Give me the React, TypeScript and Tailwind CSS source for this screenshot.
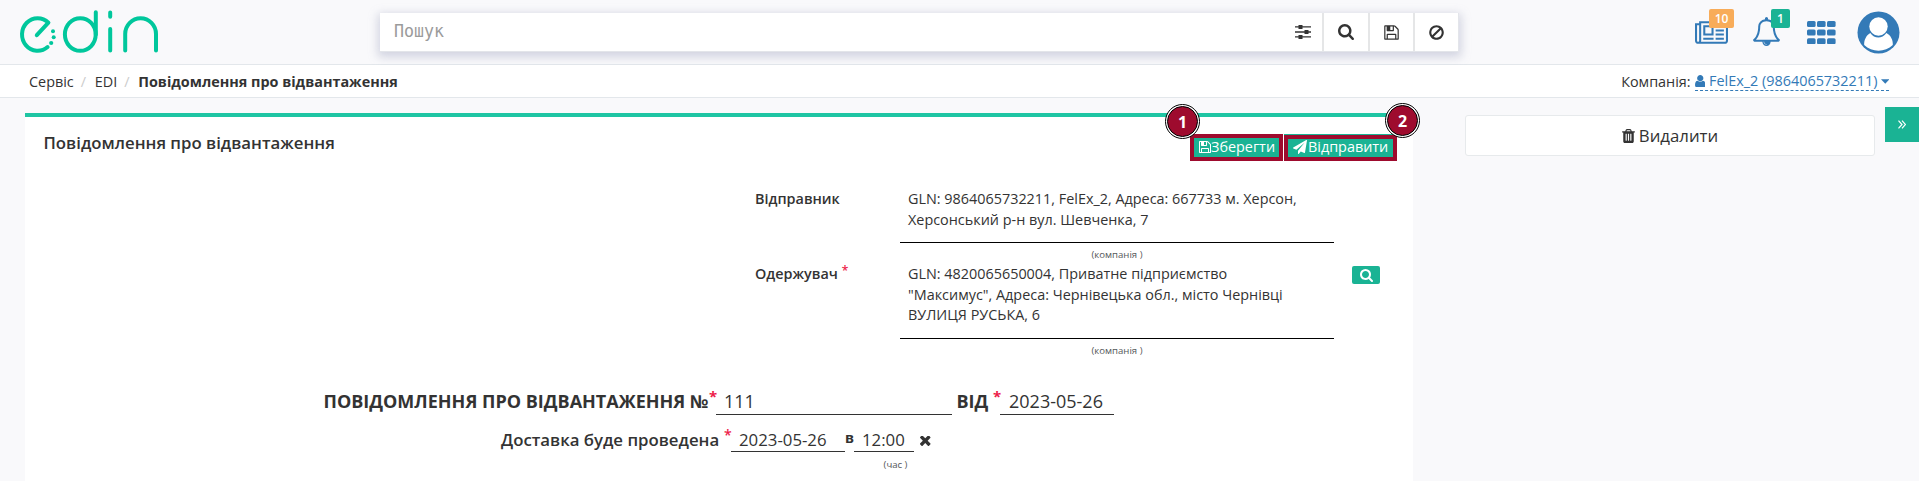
import React from "react";

const paths = {
  search:
    "M1152 704q0-185-131.5-316.5t-316.5-131.5-316.5 131.5-131.5 316.5 131.5 316.5 316.5 131.5 316.5-131.5 131.5-316.5zm512 832q0 52-38 90t-90 38q-54 0-90-38l-343-342q-179 124-399 124-143 0-273.5-55.5t-225-150-150-225-55.5-273.5 55.5-273.5 150-225 225-150 273.5-55.5 273.5 55.5 225 150 150 225 55.5 273.5q0 220-124 399l343 343q37 37 37 90z",
  save: "M512 1536h768v-384h-768v384zm896 0h128v-896q0-14-10-38.5t-20-34.5l-281-281q-10-10-34-20t-39-10v416q0 40-28 68t-68 28h-576q-40 0-68-28t-28-68v-416h-128v1280h128v-416q0-40 28-68t68-28h832q40 0 68 28t28 68v416zm-384-928v-320q0-13-9.5-22.5t-22.5-9.5h-192q-13 0-22.5 9.5t-9.5 22.5v320q0 13 9.5 22.5t22.5 9.5h192q13 0 22.5-9.5t9.5-22.5zm640 32v928q0 40-28 68t-68 28h-1344q-40 0-68-28t-28-68v-1344q0-40 28-68t68-28h928q40 0 88 20t76 48l280 280q28 28 48 76t20 88z",
  bell: "M912 1696q0-16-16-16-59 0-101.5-42.5t-42.5-101.5q0-16-16-16t-16 16q0 73 51.5 124.5t124.5 51.5q16 0 16-16zm-666-288h1300q-266-300-266-832 0-51-24-105t-69-103-121.5-80.5-169.5-31.5-169.5 31.5-121.5 80.5-69 103-24 105q0 532-266 832zm1482 0q0 52-38 90t-90 38h-448q0 106-75 181t-181 75-181-75-75-181h-448q-52 0-90-38t-38-90q50-42 91-88t85-119.5 74.5-158.5 50-206 19.5-260q0-152 117-282.5t307-158.5q-8-19-8-39 0-40 28-68t68-28 68 28 28 68q0 20-8 39 190 28 307 158.5t117 282.5q0 139 19.5 260t50 206 74.5 158.5 85 119.5 91 88z",
  news: "M1024 512h-384v384h384v-384zm128 640v128h-640v-128h640zm0-768v640h-640v-640h640zm640 768v128h-512v-128h512zm0-256v128h-512v-128h512zm0-256v128h-512v-128h512zm0-256v128h-512v-128h512zm-1536 960v-960h-128v960q0 26 19 45t45 19 45-19 19-45zm1664 0v-1088h-1536v1088q0 33-11 64h1483q26 0 45-19t19-45zm128-1216v1216q0 80-56 136t-136 56h-1664q-80 0-136-56t-56-136v-1088h256v-128h1792z",
  trash:
    "M704 1376v-704q0-14-9-23t-23-9h-64q-14 0-23 9t-9 23v704q0 14 9 23t23 9h64q14 0 23-9t9-23zm256 0v-704q0-14-9-23t-23-9h-64q-14 0-23 9t-9 23v704q0 14 9 23t23 9h64q14 0 23-9t9-23zm256 0v-704q0-14-9-23t-23-9h-64q-14 0-23 9t-9 23v704q0 14 9 23t23 9h64q14 0 23-9t9-23zm-544-992h448l-48-117q-7-9-17-11h-317q-10 2-17 11zm928 32v64q0 14-9 23t-23 9h-96v948q0 83-47 143.5t-113 60.5h-832q-66 0-113-58.5t-47-141.5v-952h-96q-14 0-23-9t-9-23v-64q0-14 9-23t23-9h309l70-167q15-37 54-63t79-26h320q40 0 79 26t54 63l70 167h309q14 0 23 9t9 23z",
  plane:
    "M1764 11q33 24 27 64l-256 1536q-5 29-32 45-14 8-31 8-11 0-24-5l-453-185-242 295q-18 23-49 23-13 0-22-4-19-7-30.5-23.5t-11.5-36.5v-349l864-1059-1069 925-395-162q-37-14-40-55-2-40 32-59l1664-960q15-9 32-9 20 0 36 11z",
  ban: "M1440 893q0-161-87-295l-754 753q137 89 297 89 111 0 211.5-43.5t173.5-116.5 116-174.5 43-212.5zm-999 299l755-754q-135-91-300-91-148 0-273 73t-198 199-73 274q0 162 89 299zm1223-299q0 157-61 300t-163.5 246-245 164-298.5 61-298.5-61-245-164-163.5-246-61-300 61-299.5 163.5-245.5 245-164 298.5-61 298.5 61 245 164 163.5 245.5 61 299.5z",
  user: "M1536 1399q0 109-62.5 187t-150.5 78h-854q-88 0-150.5-78t-62.5-187q0-85 8.5-160.5t31.5-152 58.5-131 94-89 134.5-34.5q131 128 313 128t313-128q76 0 134.5 34.5t94 89 58.5 131 31.5 152 8.5 160.5zm-256-887q0 159-112.5 271.5t-271.5 112.5-271.5-112.5-112.5-271.5 112.5-271.5 271.5-112.5 271.5 112.5 112.5 271.5z",
  times:
    "M1490 1322q0 40-28 68l-136 136q-28 28-68 28t-68-28l-294-294-294 294q-28 28-68 28t-68-28l-136-136q-28-28-28-68t28-68l294-294-294-294q-28-28-28-68t28-68l136-136q28-28 68-28t68 28l294 294 294-294q28-28 68-28t68 28l136 136q28 28 28 68t-28 68l-294 294 294 294q28 28 28 68z",
};

function Icon({
  name,
  box = "0 0 1792 1792",
  className,
}: {
  name: keyof typeof paths;
  box?: string;
  className: string;
}) {
  return (
    <svg viewBox={box} fill="currentColor" className={`shrink-0 ${className}`}>
      <path d={paths[name]} />
    </svg>
  );
}

function Logo() {
  return (
    <svg
      width="160"
      height="64"
      viewBox="0 0 160 64"
      fill="none"
      stroke="#00c79c"
      strokeWidth="4"
      strokeLinecap="round"
      strokeLinejoin="round"
      className="shrink-0"
    >
      <path d="M47.6 47A15.6 16.3 0 1 1 48.4 22.7L36.8 35.2" />
      <g fill="#00c79c" stroke="none">
        <circle cx="53" cy="31.2" r="2" />
        <circle cx="53.7" cy="37.2" r="2" />
        <circle cx="51.2" cy="43" r="2.1" />
      </g>
      <ellipse cx="80.3" cy="34.5" rx="15.4" ry="16.3" />
      <path d="M95.8 12.2V34.5M110.2 12.5V16.8M110.2 29V50.5M125.2 50.6V34A15.4 15.8 0 0 1 156 34V50.6" />
    </svg>
  );
}

function Field({ label, required, lines, caption, className, action }: {
  label: string;
  required?: boolean;
  lines: string[];
  caption: string;
  className: string;
  action?: boolean;
}) {
  return (
    <div className={`flex items-start pl-[730px] text-[14.4px] leading-[20.5px] ${className}`}>
      <div className="flex w-[145px] shrink-0 items-start font-semibold">
        {label}
        {required && <span className="-mt-[2px] ml-1 text-[12px] leading-[18px] text-[#ed1c4a]">*</span>}
      </div>
      <div className="w-[434px] shrink-0">
        <div className="border-b border-black pb-[12px] pl-2 whitespace-nowrap">
          {lines.map((line) => (
            <div key={line}>{line}</div>
          ))}
        </div>
        <div className="mt-[6px] text-center text-[9.6px] leading-[12px] text-[#55585a]">{caption}</div>
      </div>
      {action && (
        <button className="mt-[2px] ml-[18px] flex h-[18px] w-7 items-center justify-center rounded-[2px] bg-[#1ab394] text-white">
          <Icon name="search" box="0 0 1664 1664" className="size-[13px]" />
        </button>
      )}
    </div>
  );
}

function Marker({ n, className }: { n: number; className: string }) {
  return (
    <div
      className={`absolute flex size-[35px] items-center justify-center rounded-full border border-black bg-white p-[1px] ${className}`}
    >
      <div className="flex size-full items-center justify-center rounded-full border border-black bg-[#9e0b2e] text-[16px] font-bold text-white">
        {n}
      </div>
    </div>
  );
}

export default function App() {
  return (
    <div className="flex h-[481px] w-[1919px] flex-col overflow-hidden bg-[#f9f9fb] font-['Open_Sans',sans-serif] text-[#333333]">
      <header className="flex h-[65px] shrink-0 items-start border-b border-[#e3e7eb]">
        <Logo />
        <div className="mt-[13px] ml-[220px] flex h-[39px] w-[1079px] border-r border-b border-[#e3e5ea] bg-white shadow-[0_3px_9px_2px_rgba(150,155,185,0.4)]">
          <div className="flex flex-1 items-center justify-between pr-[11px] pl-[14px]">
            <span className="mt-px origin-left scale-y-110 font-['DejaVu_Sans_Mono',monospace] text-[16.6px] text-[#9b9b9b]">Пошук</span>
            <svg width="16" height="14" viewBox="0 0 16 14" className="fill-[#333]">
              <path d="M0 1.2h16v1.4H0zM0 6.3h16v1.4H0zM0 11.2h16v1.4H0z" />
              <path d="M3.5 0h4v4h-4zM9.5 5h4v4h-4zM3.5 10h4v4h-4z" />
            </svg>
          </div>
          <button className="flex w-[46px] items-center justify-center border-l-2 border-[#e5e6e7]">
            <Icon name="search" box="0 0 1664 1664" className="size-4" />
          </button>
          <button className="flex w-[45px] items-center justify-center border-l-2 border-[#e5e6e7]">
            <Icon name="save" className="size-[17px]" />
          </button>
          <button className="flex w-[45px] items-center justify-center border-l-2 border-[#e5e6e7]">
            <Icon name="ban" className="size-[17px]" />
          </button>
        </div>
        <div className="flex text-[#337ab7]">
          <div className="relative ml-[236px] pt-[19px]">
            <Icon name="news" box="0 0 2048 1792" className="h-[29px] w-[33px]" />
            <span className="absolute top-[9px] left-[14px] flex h-[19px] w-[25px] items-center justify-center rounded-[2px] bg-[#f8ac59] text-[12px] font-semibold text-white">10</span>
          </div>
          <div className="relative ml-[24px] pt-[17px]">
            <Icon name="bell" className="size-[29px]" />
            <span className="absolute top-[9px] left-[19px] flex h-[19px] w-[19px] items-center justify-center rounded-[2px] bg-[#1ab394] text-[12px] font-semibold text-white">1</span>
          </div>
          <svg width="29" height="23" viewBox="0 0 29 23" fill="currentColor" className="mt-[21px] ml-[26px]">
            {[0, 8.6, 17.2].map((y) =>
              [0, 10, 20].map((x) => <rect key={`${x}-${y}`} x={x} y={y} width="8.6" height="6" rx="1.5" />),
            )}
          </svg>
          <svg width="43" height="43" viewBox="0 0 43 43" className="mt-[10.5px] ml-[20.5px]">
            <circle cx="21.5" cy="21.5" r="21" fill="currentColor" />
            <path d="M7.2 34C6.8 29 9.5 24 13.3 22C17.5 28 25 28 29.4 22C33.5 24 36.2 29 35.8 34C28 41.5 15 41.5 7.2 34Z" fill="#fff" />
            <circle cx="21.5" cy="15.5" r="9.2" fill="#fff" />
          </svg>
        </div>
      </header>

      <nav className="flex h-[33px] shrink-0 items-center justify-between border-b border-[#e3e7eb] bg-white pt-[2px] pr-[30px] pl-[29px] text-[14.4px]">
        <div className="flex">
          <span>Сервіс</span>
          <span className="w-[21px] pl-[7px] text-[#ccc]">/</span>
          <span>EDI</span>
          <span className="w-[21px] pl-[7px] text-[#ccc]">/</span>
          <span className="font-bold">Повідомлення про відвантаження</span>
        </div>
        <div className="flex">
          <span>Компанія:</span>
          <a className="-mt-px ml-1 flex h-[21px] items-center border-b border-dashed border-[#337ab7] pt-[2px] text-[#337ab7]">
            <Icon name="user" box="256 128 1280 1536" className="h-[12.5px] w-[10.5px]" />
            <span className="ml-1">FelEx_2 (9864065732211)</span>
            <svg width="8.5" height="5" viewBox="0 0 9 5" fill="currentColor" className="ml-[3px]">
              <path d="M0 0h9L4.5 5z" />
            </svg>
          </a>
        </div>
      </nav>

      <div className="flex min-h-0 flex-1 items-start">
        <main className="relative mt-[15px] ml-[25px] h-[368px] w-[1388px] border-t-4 border-[#1fc5a3] bg-white">
          <div className="flex h-[72px] items-start justify-between pr-4 pl-[18.5px]">
            <h1 className="mt-[14px] text-[16.8px] leading-6 font-semibold">Повідомлення про відвантаження</h1>
            <div className="mt-[17px] flex gap-[1px] text-[14.4px] leading-[16px] text-white">
              <button className="flex h-[27px] w-[93px] items-center border-4 border-[#9e0b2e] bg-[#1ab394] pb-[2px] pl-[5px] whitespace-nowrap">
                <Icon name="save" box="128 128 1536 1536" className="mt-px size-[12px]" />
                <span>Зберегти</span>
              </button>
              <button className="mt-px flex h-[26px] w-[113px] items-center border-4 border-[#9e0b2e] bg-[#1ab394] pb-[3px] pl-[5px] whitespace-nowrap shadow-[0_-1px_0_#1ab394]">
                <Icon name="plane" className="size-[14px]" />
                <span className="ml-px">Відправити</span>
              </button>
            </div>
          </div>
          <Marker n={1} className="top-[-13px] left-[1140px]" />
          <Marker n={2} className="top-[-14px] left-[1360px]" />

          <Field
            className="h-[75px]"
            label="Відправник"
            lines={["GLN: 9864065732211, FelEx_2, Адреса: 667733 м. Херсон,", "Херсонський р-н вул. Шевченка, 7"]}
            caption="(компанія )"
          />
          <Field
            className="h-[116px]"
            label="Одержувач"
            required
            lines={[
              "GLN: 4820065650004, Приватне підприємство",
              "\"Максимус\", Адреса: Чернівецька обл., місто Чернівці",
              "ВУЛИЦЯ РУСЬКА, 6",
            ]}
            caption="(компанія )"
            action
          />

          <div className="flex h-[36px] items-start pl-[298.5px] text-[18px] leading-[30px] whitespace-nowrap">
            <span className="mt-[6px] w-[385.5px] font-bold">ПОВІДОМЛЕННЯ ПРО ВІДВАНТАЖЕННЯ №</span>
            <span className="mt-[4px] w-[7px] text-[15px] leading-[24px] font-bold text-[#ed1c4a]">*</span>
            <span className="h-[35px] w-[236px] border-b border-[#333] pt-[6px] pl-[8px]">111</span>
            <span className="mt-[6px] ml-[4.5px] w-[36.5px] font-bold">ВІД</span>
            <span className="mt-[4px] w-[7px] text-[15px] leading-[24px] font-bold text-[#ed1c4a]">*</span>
            <span className="h-[35px] w-[114px] border-b border-[#333] pt-[6px] pl-[9px]">2023-05-26</span>
          </div>
          <div className="flex items-start pl-[476px] text-[16.8px] leading-[28px] whitespace-nowrap">
            <span className="mt-[10px] w-[223px] font-semibold">Доставка буде проведена</span>
            <span className="mt-[8px] w-[7px] text-[14px] leading-[22px] font-semibold text-[#ed1c4a]">*</span>
            <span className="h-[36px] w-[114px] border-b border-[#333] pt-[10px] pl-[8px]">2023-05-26</span>
            <span className="mt-[8px] w-[9px] text-[14.4px] font-bold">в</span>
            <div className="w-[60px]">
              <div className="h-[36px] border-b border-[#333] pt-[10px] pl-[8px]">12:00</div>
              <div className="mt-[7px] pl-[23px] text-center text-[9.6px] leading-[12px] text-[#55585a]">(час )</div>
            </div>
            <Icon name="times" box="302 430 1188 1188" className="mt-[20px] ml-[6px] size-[10.5px]" />
          </div>
        </main>

        <button className="mt-[17px] ml-[52px] flex h-[41px] w-[410px] items-center justify-center gap-1 rounded-[3px] border border-[#e7eaec] bg-white text-[16.8px]">
          <Icon name="trash" box="192 128 1408 1536" className="h-[14px] w-[13px]" />
          <span>Видалити</span>
        </button>
        <button className="mt-[9px] ml-[10px] flex h-[35px] w-[34px] items-center justify-center bg-[#1ab394] text-white">
          <svg width="8" height="9" viewBox="0 0 8 9" fill="none" stroke="currentColor" strokeWidth="1.2">
            <path d="M.5.7 4 4.5.5 8.3M4 .7l3.5 3.8L4 8.3" />
          </svg>
        </button>
      </div>
    </div>
  );
}
